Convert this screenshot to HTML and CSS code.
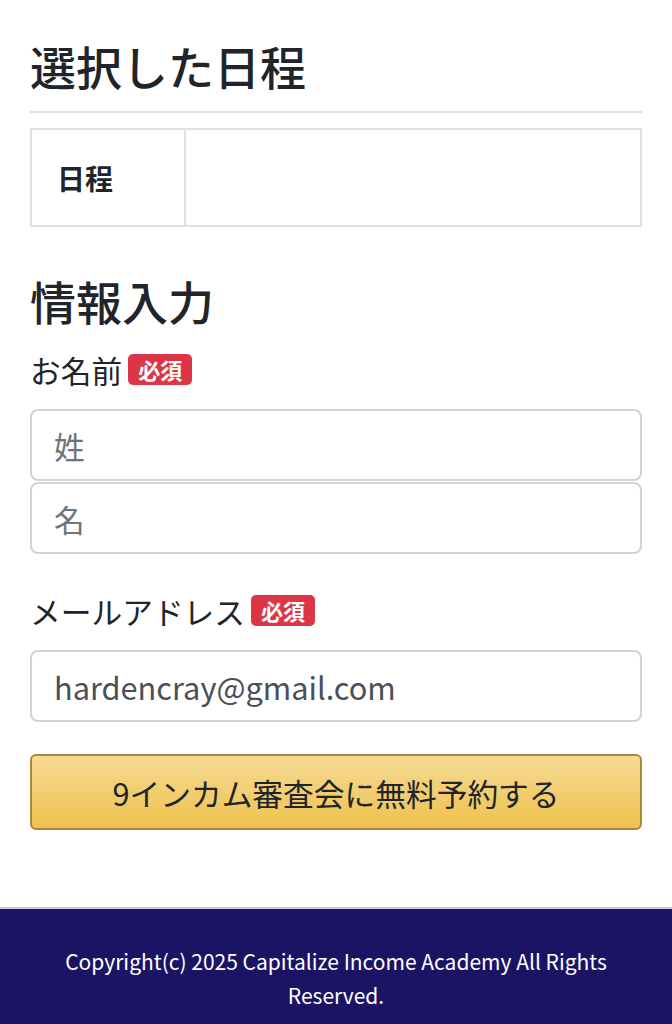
FILE: index.html
```html
<!DOCTYPE html>
<html lang="ja">
<head>
<meta charset="utf-8">
<title>予約</title>
<link rel="stylesheet" href="styles.css">
</head>
<body>
<main class="container">
  <h2 class="heading">選択した日程</h2>
  <hr class="rule">
  <table class="schedule">
    <tr>
      <th class="schedule-label">日程</th>
      <td class="schedule-value"></td>
    </tr>
  </table>

  <h2 class="heading heading-form">情報入力</h2>
  <form class="form">
    <div class="field">
      <label class="label">お名前<span class="badge">必須</span></label>
      <div class="name-group">
        <input class="input" type="text" placeholder="姓">
        <input class="input" type="text" placeholder="名">
      </div>
    </div>
    <div class="field">
      <label class="label">メールアドレス<span class="badge">必須</span></label>
      <input class="input input-value" type="email" value="hardencray@gmail.com">
    </div>
    <button class="submit" type="button">9インカム審査会に無料予約する</button>
  </form>
</main>
<footer class="footer">
  <p class="copyright">Copyright(c) 2025 Capitalize Income Academy All Rights Reserved.</p>
</footer>
</body>
</html>
```
FILE: styles.css
```css
* { box-sizing: border-box; }
html, body { margin: 0; padding: 0; }
body {
  font-family: "Noto Sans CJK JP", "Noto Sans", sans-serif;
  color: #212529;
  background: #fff;
}
.container {
  padding: 38px 30px 77px;
}
.heading {
  margin: 0;
  font-size: 46px;
  font-weight: 500;
  line-height: 1.2;
}
.rule {
  margin: 18px 0 15px;
  border: 0;
  border-top: 2px solid #dee2e6;
}
.schedule {
  width: 100%;
  border-collapse: collapse;
}
.schedule th, .schedule td {
  border: 2px solid #dee2e6;
  height: 97px;
}
.schedule-label {
  width: 154px;
  font-size: 28px;
  font-weight: 700;
  text-align: left;
  padding: 0 25px;
}
.heading-form {
  margin-top: 46px;
}
.form {
  display: flex;
  flex-direction: column;
}
.field {
  display: flex;
  flex-direction: column;
  margin-bottom: 15px;
}
.label {
  display: flex;
  align-items: center;
  font-size: 30.72px;
  line-height: 45px;
  margin: 19px 0 17px;
}
.badge {
  display: inline-block;
  margin-left: 6px;
  background: #dc3545;
  color: #fff;
  font-size: 22px;
  font-weight: 700;
  line-height: 31px;
  padding: 0 10px;
  border-radius: 5px;
}
.name-group {
  display: flex;
  flex-direction: column;
  gap: 1px;
}
.input {
  width: 100%;
  height: 72px;
  border: 2px solid #ced4da;
  border-radius: 8px;
  padding: 0 22px;
  font-family: inherit;
  font-size: 30.72px;
  color: #495057;
  background: #fff;
}
.input::placeholder { color: #6c757d; }
.submit {
  width: 100%;
  height: 76px;
  margin-top: 17px;
  border: 2px solid #a8893a;
  border-radius: 6px;
  background: linear-gradient(to bottom, #f6da96, #efc24c);
  font-family: inherit;
  font-size: 30.72px;
  color: #212529;
}
.footer {
  border-top: 2px solid #c9c9d6;
  background: #1b1464;
  color: #fff;
  padding: 35px 50px 30px;
  text-align: center;
}
.copyright {
  margin: 0;
  font-size: 21px;
  line-height: 34px;
}
```
